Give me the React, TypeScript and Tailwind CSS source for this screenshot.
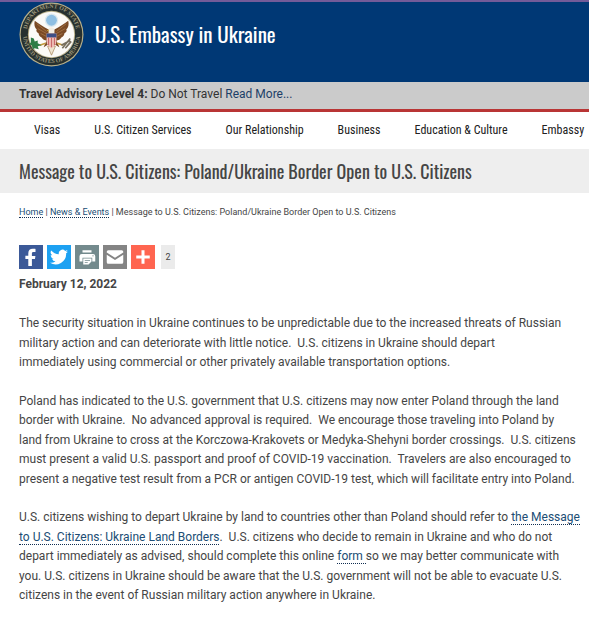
import type { ReactNode } from "react";

const navItems = ["Visas", "U.S. Citizen Services", "Our Relationship", "Business", "Education & Culture", "Embassy"];

function Seal() {
  return (
    <svg viewBox="0 0 66 66" className="size-[65px] shrink-0" role="img" aria-label="Department of State seal">
      <defs>
        <path id="seal-top" d="M8.5 36A25 25 0 1 1 57.5 36" />
        <path id="seal-bottom" d="M4 33A29 29 0 0 0 62 33" />
      </defs>
      <circle cx="33" cy="33" r="32.5" fill="#b9b08a" />
      <circle cx="33" cy="33" r="31.3" fill="#26302f" />
      <circle cx="33" cy="33" r="24" fill="#b9b08a" />
      <circle cx="33" cy="33" r="23" fill="#fbfaf7" />
      <g fill="#9c967a" fontSize="6" fontWeight="700" className="font-['Liberation_Serif',serif]" textAnchor="middle">
        <text><textPath href="#seal-top" startOffset="50%">DEPARTMENT OF STATE</textPath></text>
        <text><textPath href="#seal-bottom" startOffset="50%">UNITED STATES OF AMERICA</textPath></text>
      </g>
      <path d="M30 28C25 25 20 22 16 19c-1 4 0 7 2 9-1 1 0 3 2 4 0 2 1 3 3 4 1 2 3 3 5 3l-3 7 5-3 3 5 3-5 5 3-3-7c2 0 4-1 5-3 2-1 3-2 3-4 2-1 3-3 2-4 2-2 3-5 2-9-4 3-9 6-14 9z" fill="#7a4a25" />
      <path d="M18 22l10 8M19 27l9 5M22 32l6 3M48 22l-10 8M47 27l-9 5M44 32l-6 3" stroke="#a87848" strokeWidth=".8" />
      <path d="M29 45l4 9 4-9z" fill="#eee3ce" stroke="#a58258" strokeWidth=".7" />
      <circle cx="33" cy="18.5" r="6.8" fill="#dce9ef" />
      <circle cx="33" cy="18.5" r="5.5" fill="#8fbfe2" />
      <path d="M30 28c0-3 5-3 6 0v4h-6z" fill="#f3eee2" />
      <path d="M30 28l-2 1 2 1z" fill="#d4a72c" />
      <path d="M28 32h10v8c0 3-2 5-5 7-3-2-5-4-5-7z" fill="#f0c3bb" />
      <path d="M28 32h10v4H28z" fill="#3c4f86" />
      <path d="M30 36v8M33 36v10M36 36v8" stroke="#c9696a" strokeWidth="1.2" />
      <path d="M27 42l-6 2M39 42l6 2" stroke="#c49a3c" strokeWidth="1.6" />
      <path d="M12 36l3 1 1 3 3-1 0 3 4 2-4 1 1 3-4-1-2 1-1-4-3-1 2-2z" fill="#2f7d46" />
      <path d="M44 47l8-10M43 44l9-5M47 47l6-7" stroke="#77705e" strokeWidth="1.7" />
    </svg>
  );
}

function ShareButton({ label, color, children }: { label: string; color: string; children: ReactNode }) {
  return (
    <button type="button" aria-label={label} className={`size-6 shrink-0 ${color}`}>
      <svg viewBox="0 0 32 32" className="size-6" fill="#fff">{children}</svg>
    </button>
  );
}

function TextLink({ children }: { children: ReactNode }) {
  return <a href="#" className="border-b border-dotted border-[#112e51] text-[#204d74]">{children}</a>;
}

export default function App() {
  return (
    <div className="overflow-x-hidden bg-white font-['Roboto',sans-serif] text-[#454545]">
      <header className="flex h-[82px] items-start gap-[11px] border-t-2 border-[#735b99] bg-[#003875] px-[19px]">
        <Seal />
        <span className="pt-4 font-['Oswald','Roboto_Condensed','Liberation_Sans_Narrow',sans-serif] text-[21px] leading-8 text-white">U.S. Embassy in Ukraine</span>
      </header>
      <div className="h-[30px] border-b-[3px] border-[#b93535] bg-[#cbcbcb] px-[19px] text-xs leading-6 text-[#333]">
        <strong>Travel Advisory Level 4:</strong> Do Not Travel <a href="#" className="text-[#1d3f68]">Read More...</a>
      </div>
      <nav className="flex h-[37px] items-center gap-[34px] pb-0.5 pl-[34px] font-['Roboto_Condensed','Liberation_Sans_Narrow',sans-serif] text-xs whitespace-nowrap text-[#212121]">
        {navItems.map((item) => <a href="#" key={item}>{item}</a>)}
      </nav>
      <div className="bg-[#eee] px-[19px] py-[6px]">
        <h1 className="font-['Oswald','Roboto_Condensed','Liberation_Sans_Narrow',sans-serif] text-lg leading-8 font-normal whitespace-nowrap">Message to U.S. Citizens: Poland/Ukraine Border Open to U.S. Citizens</h1>
      </div>
      <main className="pt-[11px] pr-[9px] pb-3 pl-[19px]">
        <p className="text-[9px] leading-4">
          <TextLink>Home</TextLink> | <TextLink>News &amp; Events</TextLink> | Message to U.S. Citizens: Poland/Ukraine Border Open to U.S. Citizens
        </p>
        <div className="mt-[25px] flex gap-1">
          <ShareButton label="Share on Facebook" color="bg-[#3b5998]">
            <path d="M22 5.2v4h-2.500c-1.900 0-2.300.9-2.300 2.300v3h4.700l-.6 4.300h-4.100V28h-4.800v-9.200H8.500v-4.300h3.900v-3.600C12.400 7 14.800 5 18.300 5c1.700 0 3.200.1 3.700.2z" />
          </ShareButton>
          <ShareButton label="Share on Twitter" color="bg-[#1da1f2]">
            <path d="M28 8.600a10 10 0 0 1-2.800.8 5 5 0 0 0 2.100-2.700c-1 .5-2 1-3.100 1.200a4.900 4.900 0 0 0-8.400 4.500A14 14 0 0 1 5.700 7.200a4.900 4.900 0 0 0 1.500 6.600 5 5 0 0 1-2.200-.6v.1a4.900 4.900 0 0 0 3.900 4.800 5 5 0 0 1-2.200.1 4.900 4.900 0 0 0 4.600 3.400A9.900 9.900 0 0 1 4 23.600 14 14 0 0 0 25.500 11.100 10 10 0 0 0 28 8.600z" />
          </ShareButton>
          <ShareButton label="Print" color="bg-[#738a8d]">
            <path d="M10 7h12v3H10zM9 12h15q3 0 3 3v7h-4v-5H10v5H6v-7q0-3 3-3zM11 18h11v4l-4 4h-7zM23 14v1h2v-1zM13 20v1h7v-1zm0 3v1h4v-1z" fillRule="evenodd" />
          </ShareButton>
          <ShareButton label="Email" color="bg-[#848484]">
            <path d="M5 9q0-2 2-2h18q2 0 2 2v1l-11 7L5 10zM5 13l11 7 11-7v10q0 2-2 2H7q-2 0-2-2z" />
          </ShareButton>
          <ShareButton label="More sharing options" color="bg-[#ff6550]">
            <path d="M14 7h4v7h7v4h-7v7h-4v-7H7v-4h7z" />
          </ShareButton>
          <span className="ml-[2px] w-[14px] bg-[#ebebeb] text-center text-[9px] leading-6">2</span>
        </div>
        <p className="mt-[5px] text-xs leading-5 font-bold">February 12, 2022</p>
        <article className="mt-5 flex flex-col gap-[19px] text-xs leading-relaxed">
          <p>The security situation in Ukraine continues to be unpredictable due to the increased threats of Russian military action and can deteriorate with little notice.&nbsp; U.S. citizens in Ukraine should depart<br />immediately using commercial or other privately available transportation options.</p>
          <p>Poland has indicated to the U.S. government that U.S. citizens may now enter Poland through the land border with Ukraine.&nbsp; No advanced approval is required.&nbsp; We encourage those traveling into Poland by land from Ukraine to cross at the Korczowa-Krakovets or Medyka-Shehyni border crossings.&nbsp; U.S. citizens must present a valid U.S. passport and proof of COVID-19 vaccination.&nbsp; Travelers are also encouraged to present a negative test result from a PCR or antigen COVID-19 test, which will facilitate entry into Poland.</p>
          <p>U.S. citizens wishing to depart Ukraine by land to countries other than Poland should refer to <TextLink>the Message to U.S. Citizens: Ukraine Land Borders</TextLink>.&nbsp; U.S. citizens who decide to remain in Ukraine and who do not depart immediately as advised, should complete this online <TextLink>form </TextLink>so we may better communicate with you. U.S. citizens in Ukraine should be aware that the U.S. government will not be able to evacuate U.S. citizens in the event of Russian military action anywhere in Ukraine.</p>
        </article>
      </main>
    </div>
  );
}
